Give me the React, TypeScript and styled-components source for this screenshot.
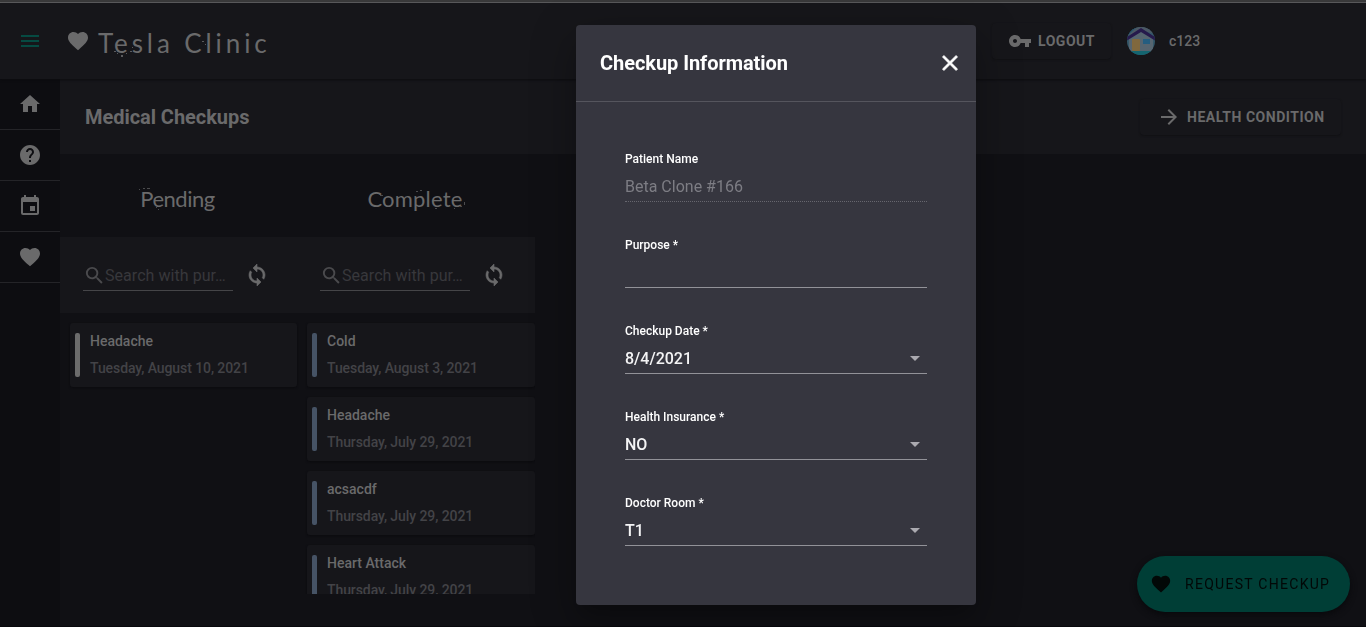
import React from "react";
import styled, { createGlobalStyle } from "styled-components";
import {
  MdArrowForward,
  MdClose,
  MdEvent,
  MdFavorite,
  MdHelp,
  MdHome,
  MdMenu,
  MdSearch,
  MdSync,
  MdVpnKey,
} from "react-icons/md";

const GlobalStyle = createGlobalStyle`
  * { box-sizing: border-box; }
  html, body { margin: 0; height: 100%; overflow: hidden; }
  body {
    background: #101014;
    color: #6a6a6b;
    font-family: Roboto, "Liberation Sans", sans-serif;
    font-size: 14px;
  }
  svg { display: block; flex: none; }
`;

const Page = styled.div`
  height: 627px;
  display: flex;
  flex-direction: column;
  border-bottom: 1px solid #08080c;
`;

const TopStrip = styled.div`
  height: 3px;
  background: #39393a;
  border-bottom: 1px solid #5f5f60;
  flex: none;
`;

const Header = styled.header`
  height: 76px;
  flex: none;
  display: flex;
  align-items: center;
  padding-left: 18px;
  background: #16161a;
  box-shadow: 0 1px 2px #0c0c0f;
  z-index: 1;
`;

const MenuIcon = styled.span`
  color: #064a42;
  margin-right: 24px;
`;

const BoldIcon = styled.span`
  path:not([fill="none"]) {
    stroke: currentColor;
    stroke-width: 0.6px;
  }
`;

const Brand = styled.div`
  display: flex;
  align-items: center;
  gap: 8px;
  flex: 1;
`;

const BrandName = styled.span`
  position: relative;
  font: 400 26px/34px Lato, sans-serif;
  letter-spacing: 3.9px;
  padding-top: 3px;
`;

const Specks = styled.svg`
  position: absolute;
  left: 0;
  top: 0;
  overflow: visible;
`;

const FlatButton = styled.button<{ $width: number; $gap: number; $pad: number }>`
  width: ${(p) => p.$width}px;
  height: 36px;
  display: flex;
  align-items: center;
  gap: ${(p) => p.$gap}px;
  padding: 0 0 0 ${(p) => p.$pad}px;
  border: 0;
  border-radius: 4px;
  background: #16161a;
  color: #6a6a6b;
  font: 700 14px Roboto, sans-serif;
  letter-spacing: 0.53px;
  white-space: nowrap;
  box-shadow: 0 1px 2px #111114;
`;

const Account = styled.div`
  width: 255px;
  padding-left: 16px;
  display: flex;
  align-items: center;
  gap: 14px;
  font-weight: 500;
`;

const Body = styled.div`
  display: flex;
  flex: 1;
  min-height: 0;
`;

const Sidebar = styled.nav`
  width: 60px;
  background: #0d0d11;
`;

const NavItem = styled.a`
  height: 51px;
  display: flex;
  align-items: center;
  justify-content: center;
  border-bottom: 1px solid #242428;
`;

const Main = styled.main`
  flex: 1;
  min-width: 0;
`;

const TitleBar = styled.div`
  height: 75px;
  display: flex;
  align-items: center;
  justify-content: space-between;
  padding: 0 25px;
  background: #16161a;
`;

const Title = styled.h1`
  margin: 0;
  font-size: 20px;
  font-weight: 700;
  letter-spacing: -0.05px;
`;

const Board = styled.div`
  width: 475px;
  height: 440px;
  display: grid;
  grid-template-columns: 237px 238px;
  overflow: hidden;
`;

const Column = styled.section`
  min-width: 0;
`;

const ColumnTitle = styled.h2<{ $spacing: number }>`
  position: relative;
  margin: 0;
  height: 83px;
  padding: 5px 2px 0 0;
  display: flex;
  align-items: center;
  justify-content: center;
  font: 400 22px Lato, sans-serif;
  letter-spacing: ${(p) => p.$spacing}px;
`;

const SearchBand = styled.div`
  height: 76px;
  display: flex;
  align-items: center;
  gap: 12px;
  padding-left: 23px;
  background: #16161a;
`;

const SearchBox = styled.label`
  width: 150px;
  height: 31px;
  padding-top: 1px;
  display: flex;
  align-items: center;
  border-bottom: 1px solid #454548;
  font-size: 16px;
  letter-spacing: 0.05px;
  color: #38383c;
  white-space: nowrap;

  svg { color: #4a4a4d; margin-right: -1px; }
`;

const Card = styled.article`
  height: 64px;
  margin: 10px 0 0 10px;
  padding: 10px 5px;
  display: flex;
  gap: 10px;
  background: #16161a;
  border-radius: 3px;
  box-shadow: 0 1px 2px #0b0b0e;
`;

const Marker = styled.div<{ $color: string }>`
  width: 5px;
  height: 44px;
  border-radius: 2px;
  background: ${(p) => p.$color};
`;

const CardText = styled.div`
  font-weight: 500;
  line-height: 16px;
`;

const CardDate = styled.div`
  margin-top: 11px;
  letter-spacing: -0.08px;
  color: #434347;
`;

const RequestButton = styled.button`
  position: fixed;
  left: 1137px;
  top: 556px;
  width: 213px;
  height: 56px;
  display: flex;
  align-items: center;
  gap: 13px;
  padding: 0 0 0 13px;
  border: 0;
  border-radius: 28px;
  background: #003e36;
  color: #020807;
  font: 400 14px Roboto, sans-serif;
  letter-spacing: 1.28px;
  white-space: nowrap;
  box-shadow: 0 3px 6px #09090c;
`;

const Dialog = styled.div`
  position: fixed;
  left: 576px;
  top: 25px;
  width: 400px;
  height: 580px;
  z-index: 5;
  border-radius: 4px;
  background: #36363f;
  color: #fff;
  box-shadow: 0 11px 15px -7px rgba(0, 0, 0, 0.2), 0 24px 38px 3px rgba(0, 0, 0, 0.14),
    0 9px 46px 8px rgba(0, 0, 0, 0.12);
`;

const DialogHeader = styled.div`
  height: 77px;
  padding: 0 13px 0 24px;
  display: flex;
  align-items: center;
  justify-content: space-between;
  border-bottom: 1px solid #55555d;
  font-size: 20px;
  font-weight: 700;
  letter-spacing: -0.06px;
`;

const Form = styled.div`
  padding: 49px 49px 0;
`;

const Field = styled.div`
  height: 86px;
`;

const Label = styled.div`
  font-size: 12px;
  font-weight: 500;
  line-height: 16px;
`;

const Value = styled.div<{ $disabled?: boolean }>`
  height: 35px;
  padding: 5px 7px 0 0;
  display: flex;
  align-items: center;
  justify-content: space-between;
  font-size: 16px;
  font-weight: ${(p) => (p.$disabled ? 400 : 500)};
  color: ${(p) => (p.$disabled ? "#7d7d84" : "#f4f4f5")};
  border-bottom: 1px ${(p) => (p.$disabled ? "dotted #66666e" : "solid #929298")};
`;

const Caret = styled.span`
  border: 5px solid transparent;
  border-top-color: #abaab0;
  border-bottom: 0;
`;

type Checkup = { purpose: string; date: string };
type Group = {
  title: string;
  spacing: number;
  color: string;
  specks: string;
  items: Checkup[];
};

const groups: Group[] = [
  {
    title: "Pending",
    spacing: -0.5,
    color: "#6c6c6c",
    specks: "M79 35h1v1h-1zM83 34h2v1h-2zM87 34h3v1h-3zM96 53h1v1h-1zM98 55h1v1h-1z",
    items: [{ purpose: "Headache", date: "Tuesday, August 10, 2021" }],
  },
  {
    title: "Complete",
    spacing: 0.2,
    color: "#465365",
    specks: "M83 41h3v1h-3zM119 37h2v1h-2zM123 36h2v1h-2zM138 54h2v1h-2zM157 54h1v1h-1zM167 48h1v3h-1zM163 52h2v1h-2z",
    items: [
      { purpose: "Cold", date: "Tuesday, August 3, 2021" },
      { purpose: "Headache", date: "Thursday, July 29, 2021" },
      { purpose: "acsacdf", date: "Thursday, July 29, 2021" },
      { purpose: "Heart Attack", date: "Thursday, July 29, 2021" },
    ],
  },
];

const fields = [
  { label: "Patient Name", value: "Beta Clone #166", disabled: true },
  { label: "Purpose *", value: "" },
  { label: "Checkup Date *", value: "8/4/2021", select: true },
  { label: "Health Insurance *", value: "NO", select: true },
  { label: "Doctor Room *", value: "T1", select: true },
];

const Avatar = () => (
  <svg width="28" height="28" viewBox="0 0 28 28">
    <defs>
      <clipPath id="round"><circle cx="14" cy="14" r="14" /></clipPath>
    </defs>
    <g clipPath="url(#round)">
      <rect width="28" height="28" fill="#35586a" />
      <path d="M0 0h28v7L14 3 0 9z" fill="#4b5864" />
      <path d="M0 0h10L0 9z" fill="#1f5670" />
      <path d="M2 10 14 3l12 7v15H2z" fill="#566570" />
      <path d="M0 10 14 1l14 9v3.500L14 5 0 13.500z" fill="#261a4c" />
      <rect x="5" y="12" width="8" height="12" rx="1" fill="#80683d" />
      <rect x="16" y="12" width="7" height="5" fill="#245d80" />
      <rect y="24" width="28" height="4" fill="#146570" />
    </g>
  </svg>
);

export default function App() {
  return (
    <>
      <GlobalStyle />
      <Page>
        <TopStrip />
        <Header>
          <MenuIcon><MdMenu size={24} /></MenuIcon>
          <Brand>
            <MdFavorite size={24} />
            <BrandName>
              Tesla Clinic
              <Specks width="170" height="38" fill="#5b5b5d">
                <path d="M16 28h2v1h-2zM19 30h1v1h-1zM23 32h2v2h-2zM28 30h1v1h-1zM32 28h2v1h-2zM34 24h1v1h-1zM104 18h2v1h-2zM107 21h1v1h-1z" />
              </Specks>
            </BrandName>
          </Brand>
          <FlatButton $width={119} $gap={6} $pad={16}>
            <MdVpnKey size={24} />
            LOGOUT
          </FlatButton>
          <Account>
            <Avatar />
            c123
          </Account>
        </Header>
        <Body>
          <Sidebar>
            <NavItem><MdHome size={24} /></NavItem>
            <NavItem><MdHelp size={24} /></NavItem>
            <NavItem><MdEvent size={24} /></NavItem>
            <NavItem><MdFavorite size={24} /></NavItem>
          </Sidebar>
          <Main>
            <TitleBar>
              <Title>Medical Checkups</Title>
              <FlatButton $width={201} $gap={6} $pad={17}>
                <MdArrowForward size={24} />
                HEALTH CONDITION
              </FlatButton>
            </TitleBar>
            <Board>
              {groups.map((group) => (
                <Column key={group.title}>
                  <ColumnTitle $spacing={group.spacing}>
                    {group.title}
                    <Specks width="237" height="83" fill="#4c4c4e">
                      <path d={group.specks} />
                    </Specks>
                  </ColumnTitle>
                  <SearchBand>
                    <SearchBox>
                      <MdSearch size={23} />
                      Search with pur…
                    </SearchBox>
                    <BoldIcon><MdSync size={24} /></BoldIcon>
                  </SearchBand>
                  {group.items.map((item, i) => (
                    <Card key={i}>
                      <Marker $color={group.color} />
                      <CardText>
                        {item.purpose}
                        <CardDate>{item.date}</CardDate>
                      </CardText>
                    </Card>
                  ))}
                </Column>
              ))}
            </Board>
          </Main>
        </Body>
      </Page>
      <RequestButton>
        <MdFavorite size={22} />
        REQUEST CHECKUP
      </RequestButton>
      <Dialog>
        <DialogHeader>
          Checkup Information
          <BoldIcon><MdClose size={26} /></BoldIcon>
        </DialogHeader>
        <Form>
          {fields.map((field) => (
            <Field key={field.label}>
              <Label>{field.label}</Label>
              <Value $disabled={field.disabled}>
                {field.value}
                {field.select && <Caret />}
              </Value>
            </Field>
          ))}
        </Form>
      </Dialog>
    </>
  );
}
